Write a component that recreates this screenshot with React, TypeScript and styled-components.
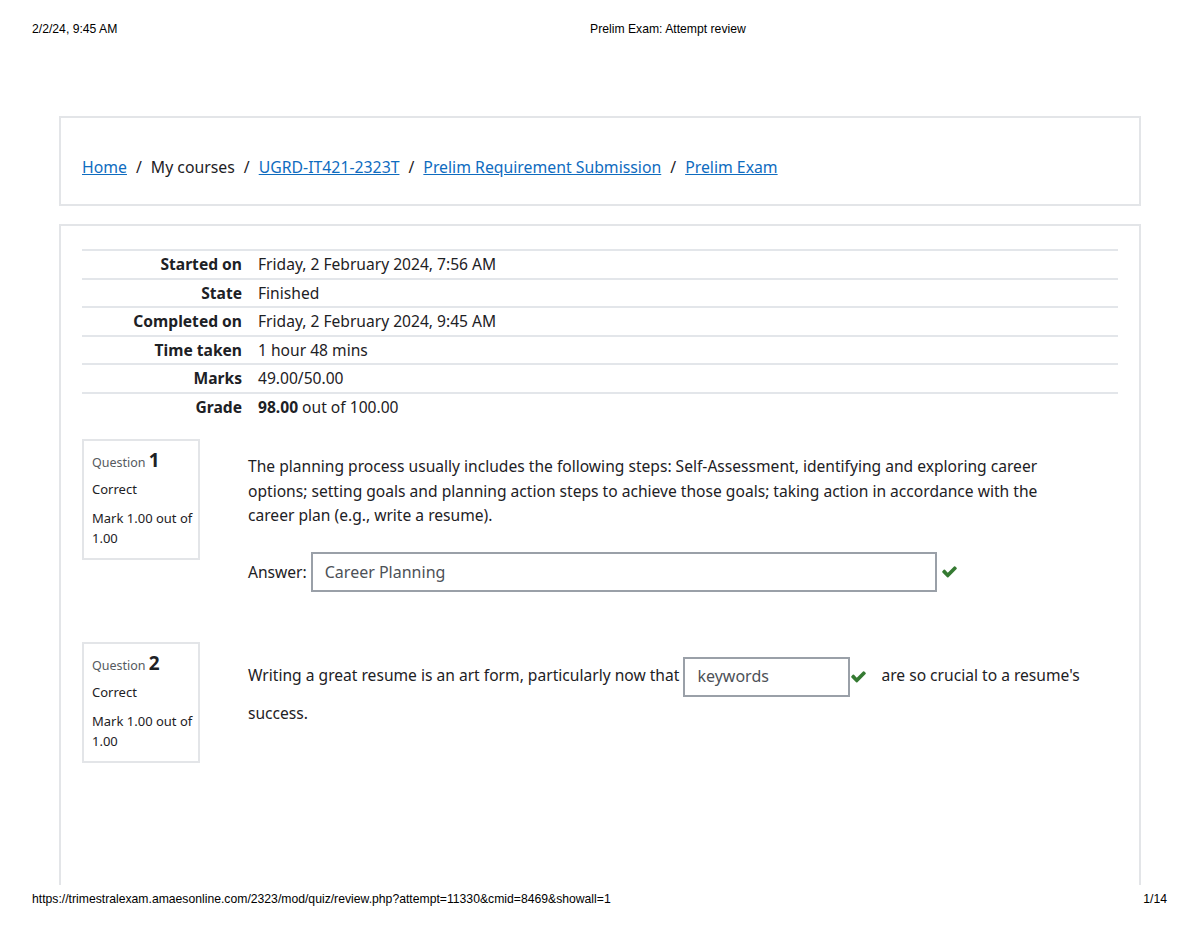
import styled, { createGlobalStyle } from 'styled-components'

const GlobalStyle = createGlobalStyle`
  body {
    margin: 0;
    background: #fff;
    font-family: "Noto Sans", "Open Sans", sans-serif;
    color: #1d2125;
  }
`

const Page = styled.div`
  width: 1200px;
  height: 927px;
  display: flex;
  flex-direction: column;
  overflow: hidden;
`

const PrintBar = styled.div<{ $h: number; $below?: number }>`
  display: flex;
  align-items: center;
  height: ${(p) => p.$h}px;
  margin-bottom: ${(p) => p.$below ?? 0}px;
  padding: 0 33px 0 32px;
  font-family: "Liberation Sans", Arial, sans-serif;
  font-size: 12.2px;
  color: #000;
`

const PrintLeft = styled.span`
  width: 558px;
`

const PrintRight = styled.span`
  margin-left: auto;
`

const Body = styled.div`
  flex: 1;
  display: flex;
  flex-direction: column;
  gap: 18px;
  padding: 58px 59px 0 59px;
  overflow: hidden;
`

const Card = styled.div<{ $open?: boolean }>`
  border: 2px solid #e3e5e8;
  ${(p) => (p.$open ? 'border-bottom: none; flex: 1;' : '')}
  padding: ${(p) => (p.$open ? '23px 21px 0 21px' : '0 21px')};
`

const Crumbs = styled.nav`
  height: 86px;
  box-sizing: border-box;
  padding-top: 12px;
  display: flex;
  align-items: center;
  font-size: 15.8px;
  gap: 9px;
`

const Crumb = styled.a`
  color: #0f6cbf;
  text-decoration: underline;
`

const Sep = styled.span`
  color: #1d2125;
`

const Summary = styled.table`
  width: 100%;
  border-collapse: collapse;
  border-top: 2px solid #e3e6ea;
  font-size: 15.6px;
`

const Row = styled.tr`
  border-bottom: 2px solid #e3e6ea;
  height: 28.5px;
  &:last-child { border-bottom: none; }
`

const Label = styled.th`
  width: 160px;
  text-align: right;
  padding: 0 16px 0 0;
  font-weight: 700;
  white-space: nowrap;
`

const Value = styled.td`
  padding: 0;
`

const Question = styled.div<{ $top: number }>`
  display: flex;
  margin-top: ${(p) => p.$top}px;
`

const Info = styled.div`
  width: 104px;
  flex-shrink: 0;
  align-self: flex-start;
  border: 2px solid #e3e5e8;
  padding: 9px 2px 10px 8px;
  font-size: 13px;
  line-height: 20px;
`

const QNo = styled.div`
  font-size: 12.5px;
  color: #555a60;
  margin-bottom: 6px;
  b {
    font-size: 19px;
    color: #1d2125;
  }
`

const State = styled.div`
  margin-bottom: 9px;
`

const Content = styled.div`
  margin-left: 48px;
  padding: 15px 32px 0 0;
  font-size: 15.6px;
  flex: 1;
`

const QText = styled.p<{ $lh: number }>`
  margin: 0;
  line-height: ${(p) => p.$lh}px;
`

const AnswerRow = styled.div`
  display: flex;
  align-items: center;
  margin-top: 24px;
  gap: 4px;
`

const Field = styled.span<{ $w: number }>`
  display: inline-flex;
  align-items: center;
  box-sizing: border-box;
  width: ${(p) => p.$w}px;
  height: 40px;
  border: 2px solid #9aa0a8;
  padding: 0 12px;
  color: #4d5157;
  vertical-align: middle;
  font-size: 16px;
`

const Tick = styled.svg`
  width: 17px;
  height: 17px;
  fill: #357a32;
  vertical-align: middle;
  margin: 0 14px 0 0;
`

const Check = () => (
  <Tick viewBox="0 0 1792 1792">
    <path d="M1671 566q0 40-28 68l-724 724-136 136q-28 28-68 28t-68-28l-136-136-362-362q-28-28-28-68t28-68l136-136q28-28 68-28t68 28l294 295 656-657q28-28 68-28t68 28l136 136q28 28 28 68z" />
  </Tick>
)

const rows: [string, React.ReactNode][] = [
  ['Started on', 'Friday, 2 February 2024, 7:56 AM'],
  ['State', 'Finished'],
  ['Completed on', 'Friday, 2 February 2024, 9:45 AM'],
  ['Time taken', '1 hour 48 mins'],
  ['Marks', '49.00/50.00'],
  ['Grade', <><b>98.00</b> out of 100.00</>],
]

const QInfo = ({ n }: { n: number }) => (
  <Info>
    <QNo>Question <b>{n}</b></QNo>
    <State>Correct</State>
    <div>Mark 1.00 out of 1.00</div>
  </Info>
)

export default function App() {
  return (
    <Page>
      <GlobalStyle />
      <PrintBar $h={58}>
        <PrintLeft>2/2/24, 9:45 AM</PrintLeft>
        <span>Prelim Exam: Attempt review</span>
      </PrintBar>
      <Body>
        <Card>
          <Crumbs>
            <Crumb>Home</Crumb>
            <Sep>/</Sep>
            <span>My courses</span>
            <Sep>/</Sep>
            <Crumb>UGRD-IT421-2323T</Crumb>
            <Sep>/</Sep>
            <Crumb>Prelim Requirement Submission</Crumb>
            <Sep>/</Sep>
            <Crumb>Prelim Exam</Crumb>
          </Crumbs>
        </Card>
        <Card $open>
          <Summary>
            <tbody>
              {rows.map(([k, v]) => (
                <Row key={k}>
                  <Label>{k}</Label>
                  <Value>{v}</Value>
                </Row>
              ))}
            </tbody>
          </Summary>
          <Question $top={18}>
            <QInfo n={1} />
            <Content>
              <QText $lh={24.5}>
                The planning process usually includes the following steps: Self-Assessment, identifying and exploring career
                options; setting goals and planning action steps to achieve those goals; taking action in accordance with the
                career plan (e.g., write a resume).
              </QText>
              <AnswerRow>
                <span>Answer:</span>
                <Field $w={626}>Career Planning</Field>
                <Check />
              </AnswerRow>
            </Content>
          </Question>
          <Question $top={50}>
            <QInfo n={2} />
            <Content>
              <QText $lh={33}>
                Writing a great resume is an art form, particularly now that <Field $w={167}>keywords</Field>
                <Check />are so crucial to a resume's success.
              </QText>
            </Content>
          </Question>
        </Card>
      </Body>
      <PrintBar $h={28} $below={14}>
        <span>https://trimestralexam.amaesonline.com/2323/mod/quiz/review.php?attempt=11330&amp;cmid=8469&amp;showall=1</span>
        <PrintRight>1/14</PrintRight>
      </PrintBar>
    </Page>
  )
}
